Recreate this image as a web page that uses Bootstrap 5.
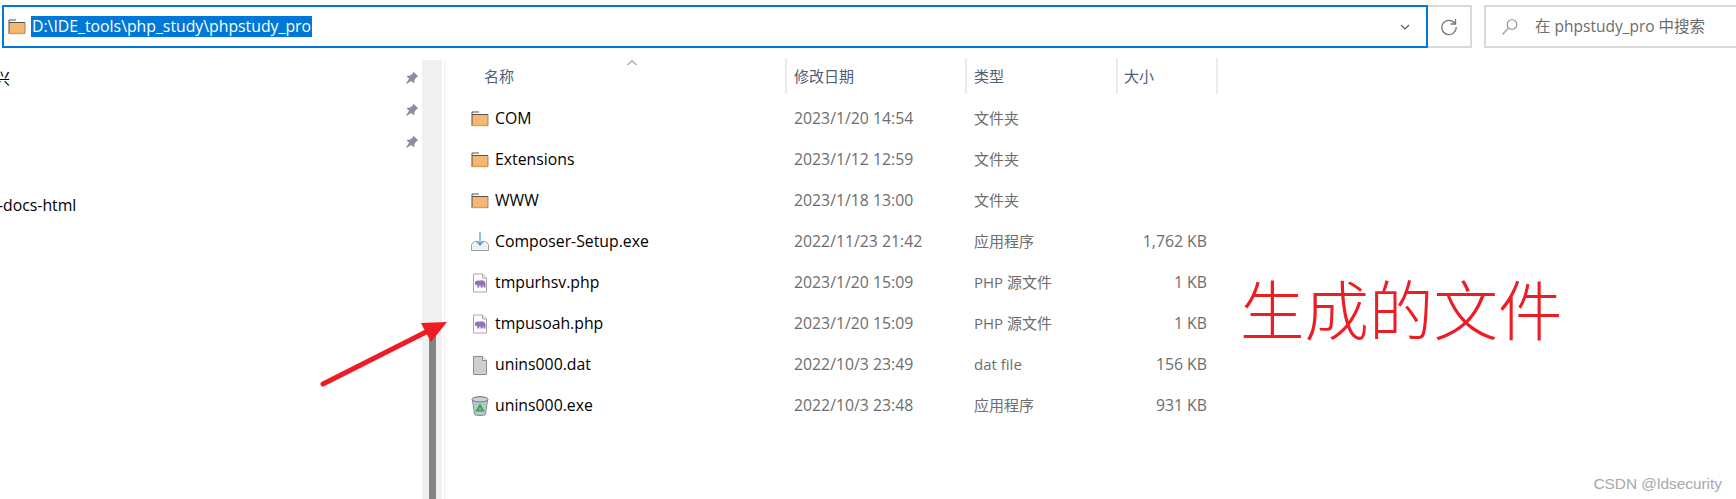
<!DOCTYPE html>
<html lang="zh-CN">
<head>
<meta charset="utf-8">
<title>phpstudy_pro</title>
<link href="https://cdn.jsdelivr.net/npm/bootstrap@5.3.0/dist/css/bootstrap.min.css" rel="stylesheet">
<style>
html,body{height:499px;overflow:hidden;background:#fff}
body{position:relative;font-family:"Open Sans","Noto Sans CJK SC",sans-serif;font-size:15.8px;color:#000}
.topbar{height:62px;padding:5px 0 14px 2px}
.addr{width:1426px;height:43px;border:2px solid #0078d7;padding:0 6px 0 4px}
.addr svg{flex:none}
.addr>svg:first-child{margin-right:5px}
.sel{background:#0078d7;color:#fff;line-height:21px;height:21px;padding:0 1px;white-space:nowrap}
.refresh{width:44px;height:43px;border:2px solid #d9d9d9;border-left:0}
.searchbox{width:252px;height:43px;margin-left:12px;border:2px solid #d9d9d9;border-right:0;padding-left:15px;color:#6d6d6d;gap:16px;font-size:15.5px}
.side{width:422px;height:437px;overflow:hidden;flex:none}
.siderow{height:32px;padding-right:3px}
.cut1{margin-left:-5px;font-size:15px}
.cut2{margin-left:-2px}
.track{width:20px;height:439px;margin-top:-2px;background:#f0f0f0;flex:none;margin-right:2px}
.thumb{width:7px;height:170px;margin:270px 0 0 7px;background:#858585}
.filelist{flex:1;border-left:1px solid #f0f0f0}
.headrow{height:36px;margin-top:-4px;color:#4c607a;position:relative;font-size:15px}
.headrow>div{height:36px;border-right:2px solid #ececec}
.caret-up{position:absolute;left:181px;top:1px}
.cname{width:342px;flex:none;padding-left:39px}
.cdate{width:180px;flex:none;padding-left:7px}
.ctype{width:151px;flex:none;padding-left:7px;font-size:15px}
.csize{width:100px;flex:none;padding-right:11px}
.headrow .csize{padding-left:6px}
.filerow{height:41px;color:#6d6d6d}
.filerow .cname{padding-left:26px;color:#000}
.ficon{width:18px;height:20px;margin-right:6px;flex:none}
.files{padding-top:4px}
.arrow{position:absolute;left:0;top:0;width:1736px;height:499px;pointer-events:none}
.note{position:absolute;left:1240px;top:264px;color:#ee1c25;font-size:64.5px;line-height:86px;font-weight:300;white-space:nowrap;font-family:"Noto Sans CJK SC",sans-serif}
.mark-wm{position:absolute;right:14px;top:472px;color:#a8a8a8;font-size:15.4px;font-family:"Liberation Sans",sans-serif}
</style>
</head>
<body>
<svg width="0" height="0" class="position-absolute">
<defs>
<symbol id="folder" viewBox="0 0 18 16"><rect x="1" y="3" width="16" height="12" fill="#f6b773"/><path d="M1 1h7M1 1v14M1 3.500h16" stroke="#55504a" stroke-width="1" fill="none"/><path d="M1 14.500h16" stroke="#e29a4c" stroke-width="1.400"/><path d="M17 3.500v11" stroke="#777" stroke-width=".8"/></symbol>
<symbol id="php" viewBox="0 0 18 20"><path d="M2.500 1h9l4 4v14h-13z" fill="#fff" stroke="#a9a9a9"/><path d="M11.500 1v4h4" fill="none" stroke="#a9a9a9"/><path d="M3.800 10.500C3.800 8 6 7 8 7.800 10 6.600 14.500 7 14.500 10.500V14.500h-2V12.500h-.8v2H9.500V12.500H8.300v2H6.300v-3l-1.300 1z" fill="#9172bb"/></symbol>
<symbol id="pin" viewBox="0 0 14 14"><path d="M8.500 0.800l4.700 4.700-1.600.8-2.300 3 .2 2.300-1.200.5-2-2.200L1.500 13 1 12.500l3.100-4.800-2.200-2 .6-1.200 2.300.2 3-2.300z" fill="#87929c"/></symbol>
</defs>
</svg>

<div class="topbar d-flex">
  <div class="addr d-flex align-items-center">
    <svg width="18" height="16"><use href="#folder"/></svg>
    <span class="sel">D:\IDE_tools\php_study\phpstudy_pro</span>
    <svg class="ms-auto me-2" width="14" height="10" viewBox="0 0 14 10"><path d="M3 3l4 4 4-4" fill="none" stroke="#555" stroke-width="1.100"/></svg>
  </div>
  <div class="refresh d-flex align-items-center justify-content-center">
    <svg width="18" height="18" viewBox="0 0 18 18"><path d="M14.800 5.200A7.200 7.200 0 1 0 16.200 9" fill="none" stroke="#777" stroke-width="1.300"/><path d="M15.500 1v5h-5" fill="none" stroke="#777" stroke-width="1.300"/></svg>
  </div>
  <div class="searchbox d-flex align-items-center">
    <svg width="18" height="18" viewBox="0 0 18 18"><circle cx="11" cy="6.500" r="4.800" fill="none" stroke="#8a8a8a" stroke-width="1.100"/><path d="M7.500 10L1.500 16.500" stroke="#b59f8b" stroke-width="1.400"/></svg>
    <span>在 phpstudy_pro 中搜索</span>
  </div>
</div>

<div class="d-flex">
  <div class="side">
    <div class="siderow d-flex align-items-center justify-content-between"><span class="cut1">兴</span><svg width="14" height="14"><use href="#pin"/></svg></div>
    <div class="siderow d-flex align-items-center justify-content-end"><svg width="14" height="14"><use href="#pin"/></svg></div>
    <div class="siderow d-flex align-items-center justify-content-end"><svg width="14" height="14"><use href="#pin"/></svg></div>
    <div class="siderow"></div>
    <div class="siderow d-flex align-items-center"><span class="cut2">-docs-html</span></div>
  </div>
  <div class="track"><div class="thumb"></div></div>
  <div class="filelist">
    <div class="headrow d-flex align-items-center">
      <div class="cname d-flex align-items-center">名称</div>
      <div class="cdate d-flex align-items-center">修改日期</div>
      <div class="ctype d-flex align-items-center">类型</div>
      <div class="csize d-flex align-items-center">大小</div>
      <svg class="caret-up" width="12" height="8" viewBox="0 0 12 8"><path d="M1.500 6L6 1.500 10.500 6" fill="none" stroke="#666" stroke-width="1"/></svg>
    </div>
    <div class="files">
      <div class="filerow d-flex align-items-center"><div class="cname d-flex align-items-center"><svg class="ficon"><use href="#folder"/></svg>COM</div><div class="cdate">2023/1/20 14:54</div><div class="ctype">文件夹</div><div class="csize text-end"></div></div>
      <div class="filerow d-flex align-items-center"><div class="cname d-flex align-items-center"><svg class="ficon"><use href="#folder"/></svg>Extensions</div><div class="cdate">2023/1/12 12:59</div><div class="ctype">文件夹</div><div class="csize text-end"></div></div>
      <div class="filerow d-flex align-items-center"><div class="cname d-flex align-items-center"><svg class="ficon"><use href="#folder"/></svg>WWW</div><div class="cdate">2023/1/18 13:00</div><div class="ctype">文件夹</div><div class="csize text-end"></div></div>
      <div class="filerow d-flex align-items-center"><div class="cname d-flex align-items-center"><svg class="ficon" viewBox="0 0 18 20"><path d="M.5 18.500v-6l3-3h3.500l2 2 2-2h3.500l3 3v6z" fill="#f0f1f2" stroke="#a0a0a0"/><path d="M9 0v12.500M6 9.500l3 3.500 3-3.500" fill="none" stroke="#4a9ad4" stroke-width="1.200"/></svg>Composer-Setup.exe</div><div class="cdate">2022/11/23 21:42</div><div class="ctype">应用程序</div><div class="csize text-end">1,762 KB</div></div>
      <div class="filerow d-flex align-items-center"><div class="cname d-flex align-items-center"><svg class="ficon"><use href="#php"/></svg>tmpurhsv.php</div><div class="cdate">2023/1/20 15:09</div><div class="ctype">PHP 源文件</div><div class="csize text-end">1 KB</div></div>
      <div class="filerow d-flex align-items-center"><div class="cname d-flex align-items-center"><svg class="ficon"><use href="#php"/></svg>tmpusoah.php</div><div class="cdate">2023/1/20 15:09</div><div class="ctype">PHP 源文件</div><div class="csize text-end">1 KB</div></div>
      <div class="filerow d-flex align-items-center"><div class="cname d-flex align-items-center"><svg class="ficon" viewBox="0 0 18 20"><path d="M2.500 1.500h9l4 4v14h-13z" fill="#cfcfcf" stroke="#8f8f8f"/><path d="M11.500 1.500v4h4" fill="#f4f4f4" stroke="#8f8f8f"/></svg>unins000.dat</div><div class="cdate">2022/10/3 23:49</div><div class="ctype">dat file</div><div class="csize text-end">156 KB</div></div>
      <div class="filerow d-flex align-items-center"><div class="cname d-flex align-items-center"><svg class="ficon" viewBox="0 0 18 20"><ellipse cx="9" cy="3.500" rx="8" ry="2.800" fill="#c8d2d8" stroke="#5f6e78"/><path d="M1.500 4.500l2 14c2 1.500 9 1.500 11 0l2-14c-3 2-12 2-15 0z" fill="#b4c6d0" stroke="#6d7c86" stroke-width=".8"/><path d="M6 14.500l3-5 3 5z" fill="none" stroke="#3fa648" stroke-width="2"/></svg>unins000.exe</div><div class="cdate">2022/10/3 23:48</div><div class="ctype">应用程序</div><div class="csize text-end">931 KB</div></div>
    </div>
  </div>
</div>

<svg class="arrow" viewBox="0 0 1736 499"><path d="M323 384L432 329" stroke="#ee1c25" stroke-width="5" stroke-linecap="round"/><path d="M421 323L447 322 431 342z" fill="#ee1c25"/></svg>
<div class="note">生成的文件</div>
<div class="mark-wm">CSDN @ldsecurity</div>
</body>
</html>
